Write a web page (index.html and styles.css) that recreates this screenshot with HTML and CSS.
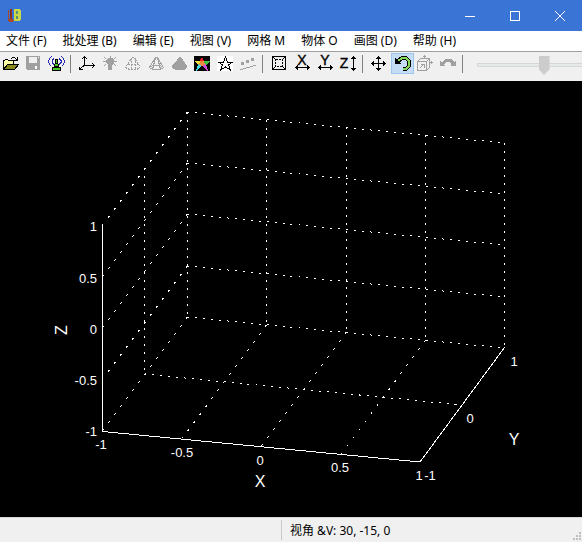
FILE: index.html
```html
<!DOCTYPE html>
<html lang="zh-CN">
<head>
    <meta charset="UTF-8">
    <meta name="viewport" content="width=device-width, initial-scale=1.0">
    <title>LB</title>
    <link rel="stylesheet" href="styles.css">
</head>
<body>
    <header class="titlebar">
        <svg class="app-logo" width="16" height="16" viewBox="0 0 16 16">
            <path d="M2 2h1v9h3v3H3l-1-1z" fill="#a8492a"/>
            <path d="M4 1h2v10H4z" fill="#8a3020"/>
            <path d="M6 11l2 1v1l-2 1z" fill="#a8492a"/>
            <path d="M8 1h5l2 2v3l-1 1 1 1v3l-2 2H8z" fill="#c9d84a"/>
            <path d="M10 3h2v3h-2zM10 8h2v3h-2z" fill="#5f8f6c"/>
        </svg>
        <div class="window-buttons">
            <button aria-label="最小化"><svg width="10" height="10"><path d="M0 5.5h10"/></svg></button>
            <button aria-label="最大化"><svg width="10" height="10"><path d="M.5 .5h9v9h-9z"/></svg></button>
            <button aria-label="关闭"><svg class="smooth" width="10" height="10"><path d="M0 0l10 10M10 0L0 10"/></svg></button>
        </div>
    </header>

    <nav class="menubar">
        <button>文件 (F)</button>
        <button>批处理 (B)</button>
        <button>编辑 (E)</button>
        <button>视图 (V)</button>
        <button>网格 M</button>
        <button>物体 O</button>
        <button>画图 (D)</button>
        <button>帮助 (H)</button>
    </nav>

    <div class="toolbar">
        <div class="tool-group">
            <button class="tool" aria-label="打开">
                <svg viewBox="0 0 23 21">
                    <path d="M4.5 16V7.5h1l1-1h2l1 1h5V11" fill="#ffffa8" stroke="#000"/>
                    <path d="M4.5 16.5l4-5h11l-4 5z" fill="#8a8a1c" stroke="#000"/>
                    <path d="M12 5.5h1M13 4.5h3M16 5.5h1M17 6.5h2M15 7.5h4M18.5 4v4" stroke="#000"/>
                </svg>
            </button>
            <button class="tool" aria-label="保存" disabled>
                <svg viewBox="0 0 23 21">
                    <path d="M4 3h14v14H5l-1-1z" fill="#a0a0a0"/>
                    <path d="M7 4h8v6H7z" fill="#efefef"/>
                    <path d="M13 13h2v3h-2zM16 4h1v1h-1z" fill="#fff"/>
                </svg>
            </button>
            <button class="tool" aria-label="广播">
                <svg viewBox="0 0 23 21">
                    <path d="M6.5 3.5l-2 2-1 3 1 3 2 2M9 5.5l-2 2v2l2 2M16.5 3.5l2 2 1 3-1 3-2 2M14 5.5l2 2v2l-2 2" fill="none" stroke="#2626b8"/>
                    <path d="M10 6h3v5h1v3h2v4H7v-4h2v-3h1z" fill="#000"/>
                    <path d="M11 7h1v3h-1zM10 11h3v2h-3zM8 15h7v2H8z" fill="#48c72c"/>
                </svg>
            </button>
        </div>
        <div class="tool-group">
            <button class="tool" aria-label="坐标轴">
                <svg viewBox="0 0 23 21">
                    <path d="M8.5 3v10M8 12.5h11M8 12.5l-5 4M6 5.5h1M7 4.5h3M10 5.5h1M17.5 11v3M16.5 10v1M16.5 14v1M3.5 14v3M3 16.5h4" fill="none" stroke="#000"/>
                </svg>
            </button>
            <button class="tool" aria-label="灯光" disabled>
                <svg viewBox="0 0 23 21">
                    <path d="M9 5h4l2 2v3l-2 2v5H9v-5l-2-2V7z" fill="#a0a0a0"/>
                    <path d="M11.5 3v2M5 4l2 2M17 4l-2 2M4 8.5h3M15 8.5h3M5 13l2-2M17 13l-2-2" stroke="#a0a0a0"/>
                </svg>
            </button>
            <button class="tool" aria-label="点云" disabled>
                <svg viewBox="0 0 23 21">
                    <path d="M10.5 4l-7 10M11.5 4l7 10M9.5 5v12M13.5 5v12M6 11.5h11M3.5 14.5l4 2h7l4-2" fill="none" stroke="#a0a0a0" stroke-dasharray="2 1"/>
                </svg>
            </button>
            <button class="tool" aria-label="线框" disabled>
                <svg viewBox="0 0 23 21">
                    <path d="M10.5 4.5h2l6 10-3 2h-8l-3-2zM10.5 4.5l-3 12M12.5 4.5l3 12M4.5 14.5l3-2h8l3 2" fill="none" stroke="#a0a0a0"/>
                </svg>
            </button>
            <button class="tool" aria-label="实体" disabled>
                <svg viewBox="0 0 23 21">
                    <path d="M11 4h2l2 3 4 6v2l-3 2H8l-4-2v-2l5-6z" fill="#a0a0a0"/>
                </svg>
            </button>
            <button class="tool" aria-label="彩色">
                <svg viewBox="0 0 23 21">
                    <path d="M3 3h16v15H3z" fill="#000"/>
                    <path d="M11 4l3 5H8z" fill="#e02020"/>
                    <path d="M3 8h6v4H7z" fill="#f3e33a"/>
                    <path d="M13 8h6l-4 4h-2z" fill="#40c040"/>
                    <path d="M9 8h4l1 4-3 1-3-1z" fill="#f08a3c"/>
                    <path d="M7 11l4 2-6 5z" fill="#46d9e6"/>
                    <path d="M15 11l-4 2 6 5z" fill="#d048d8"/>
                </svg>
            </button>
            <button class="tool" aria-label="星形">
                <svg viewBox="0 0 23 21">
                    <path d="M3 3h16v15H3z" fill="#fff"/>
                    <path d="M11.5 4l2 5h5l-4 3 2 5-5-3-5 3 2-5-4-3h5z" fill="none" stroke="#000"/>
                </svg>
            </button>
            <button class="tool" aria-label="拟合" disabled>
                <svg viewBox="0 0 23 21">
                    <path d="M4 9h3v3H4zM9 7h3v3H9zM14 5h3v3h-3z" fill="#a0a0a0"/>
                    <path d="M3 16.5h3M6 15.5h3M9 14.5h4M13 13.5h3M16 12.5h3" stroke="#a0a0a0"/>
                </svg>
            </button>
        </div>
        <div class="tool-group">
            <button class="tool" aria-label="适合窗口">
                <svg viewBox="0 0 23 21">
                    <path d="M4.5 3.5h13v13h-13z" fill="none" stroke="#000"/>
                    <path d="M7.5 6.5h7v7h-7z" fill="none" stroke="#000" stroke-dasharray="2 1"/>
                    <path d="M5 4l2 2M17 4l-2 2M5 16l2-2M17 16l-2-2" stroke="#000"/>
                </svg>
            </button>
            <button class="tool" aria-label="X 范围">
                <svg viewBox="0 0 23 21">
                    <text x="11" y="12" text-anchor="middle">X</text>
                    <path d="M4 14.5h15M6.5 12v5M5.5 13v3M16.5 12v5M17.5 13v3" stroke="#000"/>
                </svg>
            </button>
            <button class="tool" aria-label="Y 范围">
                <svg viewBox="0 0 23 21">
                    <text x="11" y="12" text-anchor="middle">Y</text>
                    <path d="M4 14.5h15M6.5 12v5M5.5 13v3M16.5 12v5M17.5 13v3" stroke="#000"/>
                </svg>
            </button>
            <button class="tool" aria-label="Z 范围">
                <svg viewBox="0 0 23 21">
                    <text x="7" y="15" text-anchor="middle">Z</text>
                    <path d="M16.5 3v15M15 4.5h3M14 5.5h5M14 15.5h5M15 16.5h3" stroke="#000"/>
                </svg>
            </button>
        </div>
        <div class="tool-group">
            <button class="tool" aria-label="平移">
                <svg viewBox="0 0 23 21">
                    <path d="M10.5 3v15M3 10.5h15M9 4.5h3M8 5.5h5M9 16.5h3M8 15.5h5M4.5 9v3M5.5 8v5M16.5 9v3M15.5 8v5" stroke="#000"/>
                </svg>
            </button>
            <button class="tool active" aria-label="旋转">
                <svg viewBox="0 0 23 21">
                    <path d="M7 8l4-3h4l3 3v5l-3 3h-3" fill="none" stroke="#000" stroke-width="4"/>
                    <path d="M7 8l4-3h4l3 3v5l-3 3h-3" fill="none" stroke="#86d957" stroke-width="2"/>
                    <path d="M4 5v6h7z" fill="#000"/>
                </svg>
            </button>
            <button class="tool" aria-label="缩放" disabled>
                <svg viewBox="0 0 23 21">
                    <path d="M3.5 8.500h9v9h-9zM3.5 8.500l3-3h9l-3 3M15.5 5.500v9l-3 3M10.5 2v4M9 3.500h3M15 9.500h4M17.5 8v3M6 15l4-4M7 11.500h3.500v3" fill="none" stroke="#a0a0a0"/>
                </svg>
            </button>
            <button class="tool" aria-label="撤销旋转" disabled>
                <svg viewBox="0 0 23 21">
                    <path d="M3 8l2 1 3-3h6l3 3 2-1v5h-5v-2l-2-2h-3l-2 2 1 2H3z" fill="#a0a0a0"/>
                </svg>
            </button>
        </div>
        <input class="zoom-slider" type="range" min="0" max="100" value="50" aria-label="缩放比例" disabled>
    </div>

    <main class="plot">
        <svg viewBox="0 81 582 436" role="img" aria-label="三维坐标系">
            <!-- back wall -->
            <g class="grid-x">
                <path d="M187 112L504 143"/>
                <path d="M187 163L504 194"/>
                <path d="M187 214L504 245"/>
                <path d="M187 266L504 297"/>
                <path d="M187 317L504 348"/>
                <path d="M144 374L462 405"/>
            </g>
            <!-- left wall and floor -->
            <g class="grid-y">
                <path d="M187.5 112L102.5 225"/>
                <path d="M187.5 163L102.5 277"/>
                <path d="M187.5 214L102.5 328"/>
                <path d="M187.5 266L102.5 379"/>
                <path d="M187.5 317L102.5 431"/>
                <path d="M266.5 325L182.5 438"/>
                <path d="M346.5 332L261.5 446"/>
                <path d="M425.5 340L341.5 454"/>
            </g>
            <g class="grid-z">
                <path d="M144.5 168v206"/>
                <path d="M187.5 112v205"/>
                <path d="M266.5 120v205"/>
                <path d="M346.5 127v205"/>
                <path d="M425.5 135v205"/>
                <path d="M504.5 143v205"/>
            </g>
            <path class="axis" d="M102.5 225v206.500L420 462L504.5 347.500"/>
            <g class="ticks" text-anchor="end">
                <text x="97" y="231">1</text>
                <text x="97" y="283">0.5</text>
                <text x="97" y="334">0</text>
                <text x="97" y="385">-0.5</text>
                <text x="97" y="436">-1</text>
            </g>
            <g class="ticks" text-anchor="middle">
                <text x="101" y="449">-1</text>
                <text x="182" y="457">-0.5</text>
                <text x="260" y="465">0</text>
                <text x="340" y="472">0.5</text>
                <text x="419" y="480">1</text>
                <text x="430" y="480">-1</text>
                <text x="470" y="423">0</text>
                <text x="514" y="366">1</text>
            </g>
            <g class="axis-names" text-anchor="middle">
                <text x="260" y="487">X</text>
                <text x="514" y="445">Y</text>
                <text transform="translate(67 330) rotate(-90)">Z</text>
            </g>
        </svg>
    </main>

    <footer class="statusbar">
        <div class="status-main"></div>
        <div class="status-view">视角 &amp;V: 30, -15, 0</div>
        <svg class="grip" width="10" height="10">
            <path d="M7 0h2v2H7zM4 3h2v2H4zM7 3h2v2H7zM1 6h2v2H1zM4 6h2v2H4zM7 6h2v2H7z" fill="#bfbfbf"/>
        </svg>
    </footer>
</body>
</html>
```
FILE: styles.css
```css
* {
    box-sizing: border-box;
    margin: 0;
    padding: 0;
}

body {
    display: flex;
    flex-direction: column;
    min-height: 100vh;
    overflow-x: hidden;
    background-color: #f0f0f0;
    color: #000;
    font-family: "Noto Sans", "Noto Sans CJK SC", sans-serif;
    font-size: 12px;
    line-height: 20px;
}

button {
    border: none;
    background: none;
    color: inherit;
    font: inherit;
}

svg {
    display: block;
    shape-rendering: crispEdges;
}

/* Title bar */
.titlebar {
    display: flex;
    align-items: center;
    justify-content: space-between;
    height: 31px;
    padding-left: 6px;
    background-color: #3a74d4;
}

.window-buttons {
    display: flex;
    height: 100%;
}

.window-buttons button {
    display: flex;
    align-items: center;
    justify-content: center;
    width: 45px;
}

.window-buttons path {
    fill: none;
    stroke: #fff;
}

.window-buttons .smooth {
    shape-rendering: auto;
}

/* Menu */
.menubar {
    display: flex;
    gap: 16px;
    height: 20px;
    padding-left: 6px;
    background-color: #fff;
    white-space: nowrap;
}

/* Toolbar */
.toolbar {
    display: flex;
    height: 30px;
    padding-top: 1px;
    border-top: 1px solid #a0a0a0;
    overflow: hidden;
}

.tool-group {
    display: flex;
    flex: none;
}

.tool-group:first-child {
    margin-left: -1px;
}

.tool-group::after {
    content: "";
    width: 1px;
    height: 18px;
    margin: 2px 5px 0 2px;
    background-color: #808080;
}

.tool {
    width: 23px;
    height: 21px;
}

.tool svg {
    width: 23px;
    height: 21px;
}

.tool text {
    font: 14px "Liberation Sans", Arial, sans-serif;
    stroke: #000;
    stroke-width: 0.4px;
}

.tool.active {
    background-color: #c4dcf4;
    outline: 1px solid #9cc6ee;
    outline-offset: -1px;
}

.zoom-slider {
    flex: none;
    width: 134px;
    height: 24px;
    margin-left: 9px;
    appearance: none;
    background: none;
}

.zoom-slider::-webkit-slider-runnable-track {
    height: 4px;
    border: 1px solid #d6d6d6;
    background-color: #e7eaea;
}

.zoom-slider::-webkit-slider-thumb {
    appearance: none;
    width: 11px;
    height: 19px;
    margin-top: -8px;
    background-color: #cccccc;
    clip-path: polygon(0 0, 100% 0, 100% 70%, 50% 100%, 0 70%);
}

/* 3D plot */
.plot {
    flex: 1;
    background-color: #000;
}

.plot svg {
    width: 100%;
}

.plot path {
    fill: none;
    stroke: #fff;
}

.grid-x path {
    stroke-dasharray: 2 6;
}

.grid-y path {
    stroke-dasharray: 2 8;
}

.grid-z path {
    stroke-dasharray: 2 6;
}

.plot text {
    fill: #fff;
    font-family: "Liberation Sans", Arial, sans-serif;
}

.ticks {
    font-size: 13px;
}

.axis-names {
    font-size: 16px;
}

/* Status bar */
.statusbar {
    display: flex;
    height: 25px;
    border-top: 1px solid #d8d8d8;
}

.status-main {
    flex: 0 0 282px;
    margin: 2px 0;
    border-right: 1px solid #c8c8c8;
}

.status-view {
    flex: 1;
    padding: 3px 8px 0;
}

.grip {
    align-self: flex-end;
}
```
